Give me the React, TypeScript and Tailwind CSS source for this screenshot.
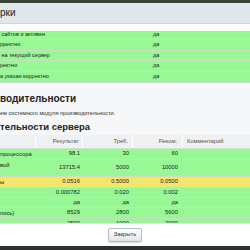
import React from "react";

const greenRows = [
  { t: "\u00a0сайтов и активен", h: "h-[9px]" },
  { t: "рректно", h: "h-[11px]" },
  { t: "\u00a0на текущий сервер", h: "h-[10px]" },
  { t: "ректно", h: "h-[11px]" },
  { t: "а указан корректно", h: "h-[11px]" },
];

type Row = { name: string; r: string; t: string; k: string; bg: string; h: string };

const perfRows: Row[] = [
  { name: "процессора", r: "98.1", t: "30", k: "60", bg: "bg-[#98f895]", h: "h-[11px]" },
  { name: "вой", r: "13715.4", t: "5000", k: "10000", bg: "bg-[#98f895]", h: "h-[17px]" },
  { name: "ы", r: "0.0516", t: "0.5000", k: "0.0500", bg: "bg-[#f4e56c]", h: "h-[11px]" },
  { name: "", r: "0.000782", t: "0.020", k: "0.002", bg: "bg-[#98f895]", h: "h-[10px]" },
  { name: "", r: "да", t: "да", k: "да", bg: "bg-[#98f895]", h: "h-[10px]" },
  { name: "пись)", r: "8529", t: "2800", k: "5600", bg: "bg-[#98f895]", h: "h-[11px]" },
  { name: "", r: "2500", t: "1000", k: "2000", bg: "bg-[#98f895]", h: "h-[11px]" },
];

export default function App() {
  return (
    <div
      className="w-[250px] h-[250px] overflow-hidden flex flex-col bg-[#f5f7f8]"
      style={{ fontFamily: '"Liberation Sans", Arial, sans-serif' }}
    >
      <div className="h-[3px] shrink-0 bg-[#3b3f37]" />
      <div className="h-[21px] shrink-0 bg-[#e1e8eb] border-b border-[#cfd9de] flex items-center text-[10px] text-[#222] leading-none">
        рки
      </div>
      <div className="flex-1 min-h-0 overflow-hidden flex flex-col">
        <div className="h-[7px] shrink-0 bg-[#fbfcfc]" />
        <div className="flex flex-col bg-[#98f895] shrink-0">
          {greenRows.map((r, i) => (
            <div
              key={i}
              className={`${r.h} shrink-0 flex items-center border-b border-[#c6e0c0] text-[5.5px] text-[#222] leading-none`}
            >
              <div className="w-[150px]">{r.t}</div>
              <div className="pl-[3px]">да</div>
            </div>
          ))}
        </div>
        <div className="pt-[11px] shrink-0 text-[10px] font-bold text-[#222] leading-none">водительности</div>
        <div className="pt-[7px] shrink-0 text-[5.6px] text-[#333] leading-none">ем системного модуля производительности.</div>
        <div className="pt-[5px] shrink-0 text-[9.5px] font-bold text-[#222] leading-none">тельности сервера</div>
        <div className="mt-[4px] h-[14px] shrink-0 flex bg-[#eef0f1] border-b border-[#d8dcde] text-[5.8px] text-[#555] leading-none items-center">
          <div className="w-[36px] h-full border-r border-[#fff]" />
          <div className="w-[47px] h-full border-r border-[#fff] flex items-center justify-end pr-[3px]">Результат</div>
          <div className="w-[50px] h-full border-r border-[#fff] flex items-center justify-end pr-[4px]">Треб.</div>
          <div className="w-[50px] h-full border-r border-[#fff] flex items-center justify-end pr-[5px]">Реком.</div>
          <div className="flex-1 h-full flex items-center pl-[4px]">Комментарий</div>
        </div>
        {perfRows.map((r, i) => (
          <div
            key={i}
            className={`${r.h} ${r.bg} shrink-0 flex border-b border-[#c6e0c0] text-[5.8px] text-[#222] leading-none`}
          >
            <div className="w-[36px] pt-[3px]">{r.name}</div>
            <div className="w-[47px] flex items-center justify-end pr-[3px]">{r.r}</div>
            <div className="w-[50px] flex items-center justify-end pr-[4px]">{r.t}</div>
            <div className="w-[50px] flex items-center justify-end pr-[5px]">{r.k}</div>
            <div className="flex-1" />
          </div>
        ))}
      </div>
      <div className="h-[23px] shrink-0 bg-white border-t border-[#e3e6e8] flex items-start justify-center pt-[4px]">
        <button className="w-[34px] h-[14px] rounded-[2px] border border-[#b9bdc0] bg-gradient-to-b from-white to-[#e2e5e7] text-[5.8px] text-[#333] leading-none shadow-[0_1px_1px_rgba(0,0,0,0.15)]">
          Закрыть
        </button>
      </div>
      <div className="h-[4px] shrink-0 bg-[#2e322f]" />
    </div>
  );
}
